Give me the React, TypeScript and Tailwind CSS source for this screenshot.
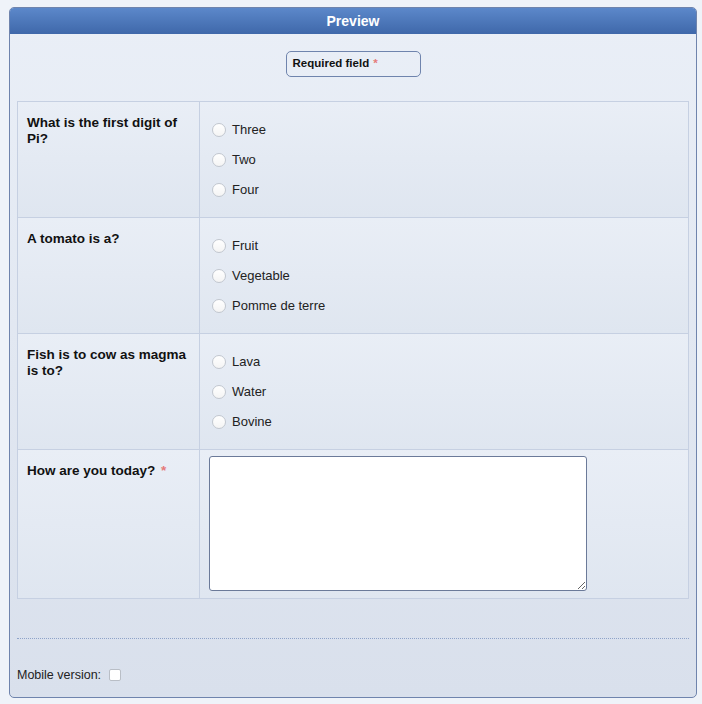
import { useState } from 'react'

const questions = [
  { q: 'What is the first digit of Pi?', options: ['Three', 'Two', 'Four'] },
  { q: 'A tomato is a?', options: ['Fruit', 'Vegetable', 'Pomme de terre'] },
  { q: 'Fish is to cow as magma is to?', options: ['Lava', 'Water', 'Bovine'] },
]

export default function App() {
  const [answers, setAnswers] = useState<Record<number, string>>({})
  const [mood, setMood] = useState('')
  const [mobile, setMobile] = useState(false)

  return (
    <main className="min-h-[704px] bg-[#eff3f9] pt-[7px] pl-[9px] pr-[5px] pb-[6px] font-['Liberation_Sans',Arial,sans-serif] text-[#111]">
      <div className="border border-[#6f84ad] rounded-[5px] overflow-hidden bg-gradient-to-b from-[#eaeff7] to-[#d9e0ec]">
        <div className="h-[26px] flex items-center justify-center bg-gradient-to-b from-[#5c88ca] to-[#3f68aa] text-white font-bold text-[14px]">
          Preview
        </div>

        <div className="px-[7px] pb-[12px]">
          <div className="flex justify-center pt-[17px]">
            <div className="w-[135px] h-[26px] flex items-center px-[6px] border border-[#6f84ad] rounded-[5px] text-[11.5px] font-bold">
              Required field <span className="text-[#e57a7a] ml-[4px]">*</span>
            </div>
          </div>

          <div className="mt-[24px] border border-[#c6d0e2]">
            {questions.map((item, i) => (
              <div key={i} className="grid grid-cols-[182px_1fr] border-b border-[#c6d0e2] bg-gradient-to-b from-[#e9eef6] to-[#dfe6f0]">
                <div className="border-r border-[#c6d0e2] pt-[13px] pl-[9px] pr-[10px] text-[13.5px] font-bold leading-[16px]">
                  {item.q}
                </div>
                <div className="pt-[13px] pb-[12px] pl-[12px]">
                  {item.options.map((opt) => (
                    <label key={opt} className="h-[30px] flex items-center gap-[6px] text-[13px] text-[#222] cursor-pointer">
                      <input
                        type="radio"
                        name={'q' + i}
                        checked={answers[i] === opt}
                        onChange={() => setAnswers({ ...answers, [i]: opt })}
                        className="appearance-none w-[14px] h-[14px] rounded-full border border-[#c2c7cf] bg-gradient-to-b from-white to-[#f4f4f4] checked:bg-[#4a74b8] m-0"
                      />
                      {opt}
                    </label>
                  ))}
                </div>
              </div>
            ))}
            <div className="grid grid-cols-[182px_1fr] bg-gradient-to-b from-[#e9eef6] to-[#dfe6f0]">
              <div className="border-r border-[#c6d0e2] pt-[13px] pl-[9px] pr-[10px] text-[13.5px] font-bold leading-[16px]">
                How are you today? <span className="text-[#e57a7a] ml-[2px]">*</span>
              </div>
              <div className="pt-[6px] pb-[7px] pl-[9px]">
                <textarea
                  value={mood}
                  onChange={(e) => setMood(e.target.value)}
                  className="block w-[378px] h-[135px] bg-white border border-[#6b7a99] rounded-[3px] outline-none p-1 text-[13px]"
                />
              </div>
            </div>
          </div>

          <div className="mt-[39px] border-t border-dotted border-[#8ea3c9]" />

          <label className="mt-[27px] flex items-center gap-[8px] text-[12.5px] text-[#222]">
            Mobile version:
            <input
              type="checkbox"
              checked={mobile}
              onChange={(e) => setMobile(e.target.checked)}
              className="appearance-none w-[12px] h-[12px] rounded-[2px] border border-[#b9bec6] bg-white checked:bg-[#4a74b8] m-0"
            />
          </label>
        </div>
      </div>
    </main>
  )
}
